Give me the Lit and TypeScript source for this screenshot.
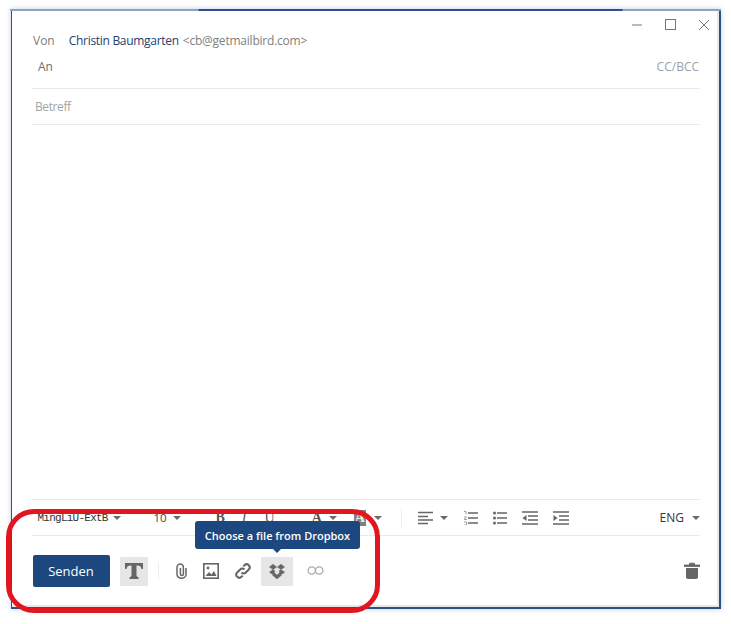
import { LitElement, html, css } from "lit";
import { customElement } from "lit/decorators.js";

const caret = html`<svg class="caret" width="8" height="4" viewBox="0 0 8 4"><path d="M0 0h8L4 4z" fill="#6b6b6b"/></svg>`;

@customElement("app-root")
export class AppRoot extends LitElement {
  static styles = css`
    :host { display: block; position: relative; width: 731px; height: 624px; overflow: hidden; background: #fff; font-family: "Open Sans", "Noto Sans", sans-serif; }
    .frame { position: absolute; left: 11px; top: 9px; width: 710px; height: 600px; box-sizing: border-box; border: 2px solid #2c5087; border-left-width: 1.5px; box-shadow: 0 0 5px rgba(120,140,200,.45), inset -2px -2px 0 #e6e8ee; background: #fff; display: flex; flex-direction: column; padding: 0 19px 0 20px; }
    .topline { position: absolute; left: -2px; right: -2px; top: -2px; height: 2px; background: linear-gradient(to right, #8ea2c2 0, #8ea2c2 188px, #2c5087 189px, #2c5087 612px, #8ea2c2 613px); }
    .winbtns { position: absolute; top: 8px; right: 10px; display: flex; gap: 23px; align-items: center; }
    .row { display: flex; align-items: center; font-size: 12px; white-space: nowrap; }
    .von { margin-top: 19px; height: 20px; color: #7d7d7d; padding-left: 1px; }
    .von .name { color: #26406f; margin-left: 14px; letter-spacing: -.3px; }
    .von .mail { color: #808080; margin-left: 4px; letter-spacing: -.22px; }
    .an { justify-content: space-between; color: #6f6f6f; padding: 0 1px 6px 6px; border-bottom: 1px solid #eaeaea; height: 39px; box-sizing: border-box; }
    .cc { color: #9aa1ab; font-size: 12px; }
    .betreff { height: 35px; color: #a3a3a3; padding-left: 3px; border-bottom: 1px solid #eaeaea; letter-spacing: -.4px; }
    .body { flex: 1; border-bottom: 1px solid #eaeaea; }
    .fmt { height: 35px; display: flex; align-items: center; border-bottom: 1px solid #eaeaea; color: #333; position: relative; }
    .fname { font-family: "Liberation Mono", monospace; font-size: 11px; margin-left: 5.5px; width: 75px; color: #333; letter-spacing: -.75px; white-space: nowrap; }
    .fsize { font-size: 11.5px; margin-left: 33px; width: 19px; color: #444; }
    .sep { width: 1px; height: 18px; background: #ececec; }
    .tool { font-family: "Liberation Serif", serif; font-size: 14px; color: #555; flex: none; }
    .b { font-weight: 700; margin-left: 35px; }
    .i { font-style: italic; margin-left: 17px; }
    .u { text-decoration: underline; margin-left: 18px; }
    .a1 { font-weight: 700; margin-left: 37px; margin-right: 7px; }
    .a2 { font-weight: 700; margin-left: 17px; margin-right: 8px; background: #808080; color: #eee; padding: 0 1px; }
    .caret { flex: none; }
    .ic { flex: none; display: block; }
    .eng { font-size: 12px; color: #333; margin-right: 8px; }
    .actions { flex: none; height: 71px; display: flex; align-items: center; position: relative; padding: 0 0 2px .5px; box-sizing: border-box; }
    .send { width: 77px; height: 32px; background: #1d477f; color: #fff; border-radius: 2px; font-size: 13px; display: flex; align-items: center; justify-content: center; }
    .tile { height: 29px; margin-top: 1px; border-radius: 1px; background: #e6e6e6; display: flex; align-items: center; justify-content: center; }
    .grow { flex: 1; }
    .tip { position: absolute; left: 195px; top: 521px; width: 165px; height: 28px; box-sizing: border-box; background: #1d477f; color: #fff; border-radius: 3px; font-size: 11px; font-weight: 600; display: flex; align-items: center; justify-content: center; white-space: nowrap; }
    .tip::after { content: ""; position: absolute; left: 77px; bottom: -4px; border: 5px solid transparent; border-bottom: 0; border-top-color: #1d477f; }
    .ring { position: absolute; left: 6px; top: 509px; width: 374px; height: 104px; box-sizing: border-box; border: 5px solid #e2161f; border-radius: 28px; pointer-events: none; }
  `;

  render() {
    const g = "#666";
    return html`
      <div class="frame">
        <div class="topline"></div>
        <div class="winbtns">
          <svg class="ic" width="10" height="10" viewBox="0 0 10 10"><path d="M0 5h10" stroke="#777" stroke-width="1"/></svg>
          <svg class="ic" width="11" height="11" viewBox="0 0 11 11"><rect x=".5" y=".5" width="10" height="10" fill="none" stroke="#777"/></svg>
          <svg class="ic" width="10" height="10" viewBox="0 0 10 10"><path d="M0 0l10 10M10 0L0 10" stroke="#777" fill="none"/></svg>
        </div>
        <div class="row von"><span>Von</span><span class="name">Christin Baumgarten</span><span class="mail">&lt;cb@getmailbird.com&gt;</span></div>
        <div class="row an"><span>An</span><span class="cc">CC/BCC</span></div>
        <div class="row betreff">Betreff</div>
        <div class="body"></div>
        <div class="fmt">
          <span class="fname">MingLiU-ExtB</span>${caret}
          <span class="fsize">10</span>${caret}
          <span class="tool b">B</span>
          <span class="tool i">I</span>
          <span class="tool u">U</span>
          <span class="tool a1">A</span>${caret}
          <span class="tool a2">A</span>${caret}
          <span class="sep" style="margin-left:19px"></span>
          <svg class="ic" style="margin-left:16px" width="15" height="14" viewBox="0 0 15 14"><path d="M0 1.500h15M0 5.500h10M0 9h15M0 12.500h10" stroke="${g}" stroke-width="1.600"/></svg>
          <span style="width:7px"></span>${caret}
          <svg class="ic" style="margin-left:16px" width="14" height="14" viewBox="0 0 14 14"><path d="M4 2h10M4 7h10M4 12h10" stroke="${g}" stroke-width="1.400"/><path d="M0 .5h2v3M0 6h2.500L0 8.500h3M0 11h2.500v3H0" stroke="${g}" stroke-width=".6" fill="none"/></svg>
          <svg class="ic" style="margin-left:15px" width="14" height="14" viewBox="0 0 14 14"><path d="M4 2h10M4 7h10M4 12h10" stroke="${g}" stroke-width="1.400"/><circle cx="1.500" cy="2" r="1.500" fill="${g}"/><circle cx="1.500" cy="7" r="1.500" fill="${g}"/><circle cx="1.500" cy="12" r="1.500" fill="${g}"/></svg>
          <svg class="ic" style="margin-left:15px" width="16" height="14" viewBox="0 0 16 14"><path d="M0 1h16M6 5h10M6 9h10M0 13h16" stroke="${g}" stroke-width="1.500"/><path d="M4.500 4v6L.5 7z" fill="${g}"/></svg>
          <svg class="ic" style="margin-left:15px" width="16" height="14" viewBox="0 0 16 14"><path d="M0 1h16M6 5h10M6 9h10M0 13h16" stroke="${g}" stroke-width="1.500"/><path d="M.5 4v6L4.500 7z" fill="${g}"/></svg>
          <span class="grow"></span>
          <span class="eng">ENG</span>${caret}
        </div>
        <div class="actions">
          <div class="send">Senden</div>
          <div class="tile" style="width:28px;margin-left:10px">
            <svg class="ic" width="18" height="16" viewBox="0 0 18 16"><path d="M0 0h18v6h-1.500C16 3.500 15 2.500 11.500 2.500V13l2 1.500V16h-9v-1.500l2-1.500V2.500C3 2.500 2 3.500 1.500 6H0z" fill="${g}"/></svg>
          </div>
          <span class="sep" style="margin-left:10px;height:16px"></span>
          <svg class="ic" style="margin-left:16px" width="12" height="16" viewBox="0 0 12 16"><path d="M11 5v6.500a4.500 3.700 0 0 1-9 0V4.500a3.200 3.500 0 0 1 6.400 0V11a1.500 1.500 0 0 1-3 0V5" fill="none" stroke="${g}" stroke-width="1.500"/></svg>
          <svg class="ic" style="margin-left:16px" width="16" height="16" viewBox="0 0 16 16"><rect x=".8" y=".8" width="14.400" height="14.400" fill="none" stroke="${g}" stroke-width="1.600"/><path d="M2.500 13l3.500-4 2.500 2.500L11 8l2.500 5z" fill="${g}"/><circle cx="5" cy="5" r="1.400" fill="${g}"/></svg>
          <svg class="ic" style="margin-left:16px" width="16" height="16" viewBox="0 0 16 16"><path d="M6.500 9.500a3 3 0 0 0 4.300 0l3-3a3 3 0 0 0-4.300-4.300L8.300 3.400M9.500 6.500a3 3 0 0 0-4.300 0l-3 3a3 3 0 0 0 4.300 4.300l1.200-1.200" fill="none" stroke="${g}" stroke-width="2"/></svg>
          <div class="tile" style="width:32px;margin-left:10px">
            <svg class="ic" width="16" height="15" viewBox="0 0 16 15"><path d="M4 .2L.3 3l3.700 2.600L7.700 3zM12 .2L8.300 3l3.700 2.600L15.700 3zM.3 8.200L4 10.800l3.700-2.600L4 5.600zM15.700 8.200L12 10.800 8.300 8.200 12 5.600zM3.500 11.200L8 15l4.500-3.800L8 8.400z" fill="${g}" stroke="${g}" stroke-width=".4"/><path d="M8 5.300L5.300 7.900 8 11l2.700-3.100z" fill="#e6e6e6"/></svg>
          </div>
          <svg class="ic" style="margin-left:14px" width="17" height="9" viewBox="0 0 17 9"><circle cx="4.800" cy="4.500" r="3.700" fill="none" stroke="#aaa" stroke-width="1.300"/><circle cx="12.200" cy="4.500" r="3.700" fill="none" stroke="#aaa" stroke-width="1.300"/></svg>
          <span class="grow"></span>
          <svg class="ic" width="16" height="17" viewBox="0 0 16 17"><path d="M0 3h16v1.500H0zM5.500 3V1.200h5V3" fill="${g}" stroke="${g}" stroke-width=".8"/><path d="M2 6h12v9a2 2 0 0 1-2 2H4a2 2 0 0 1-2-2z" fill="${g}"/></svg>
        </div>
      </div>
      <div class="tip">Choose a file from Dropbox</div>
      <div class="ring"></div>
    `;
  }
}
